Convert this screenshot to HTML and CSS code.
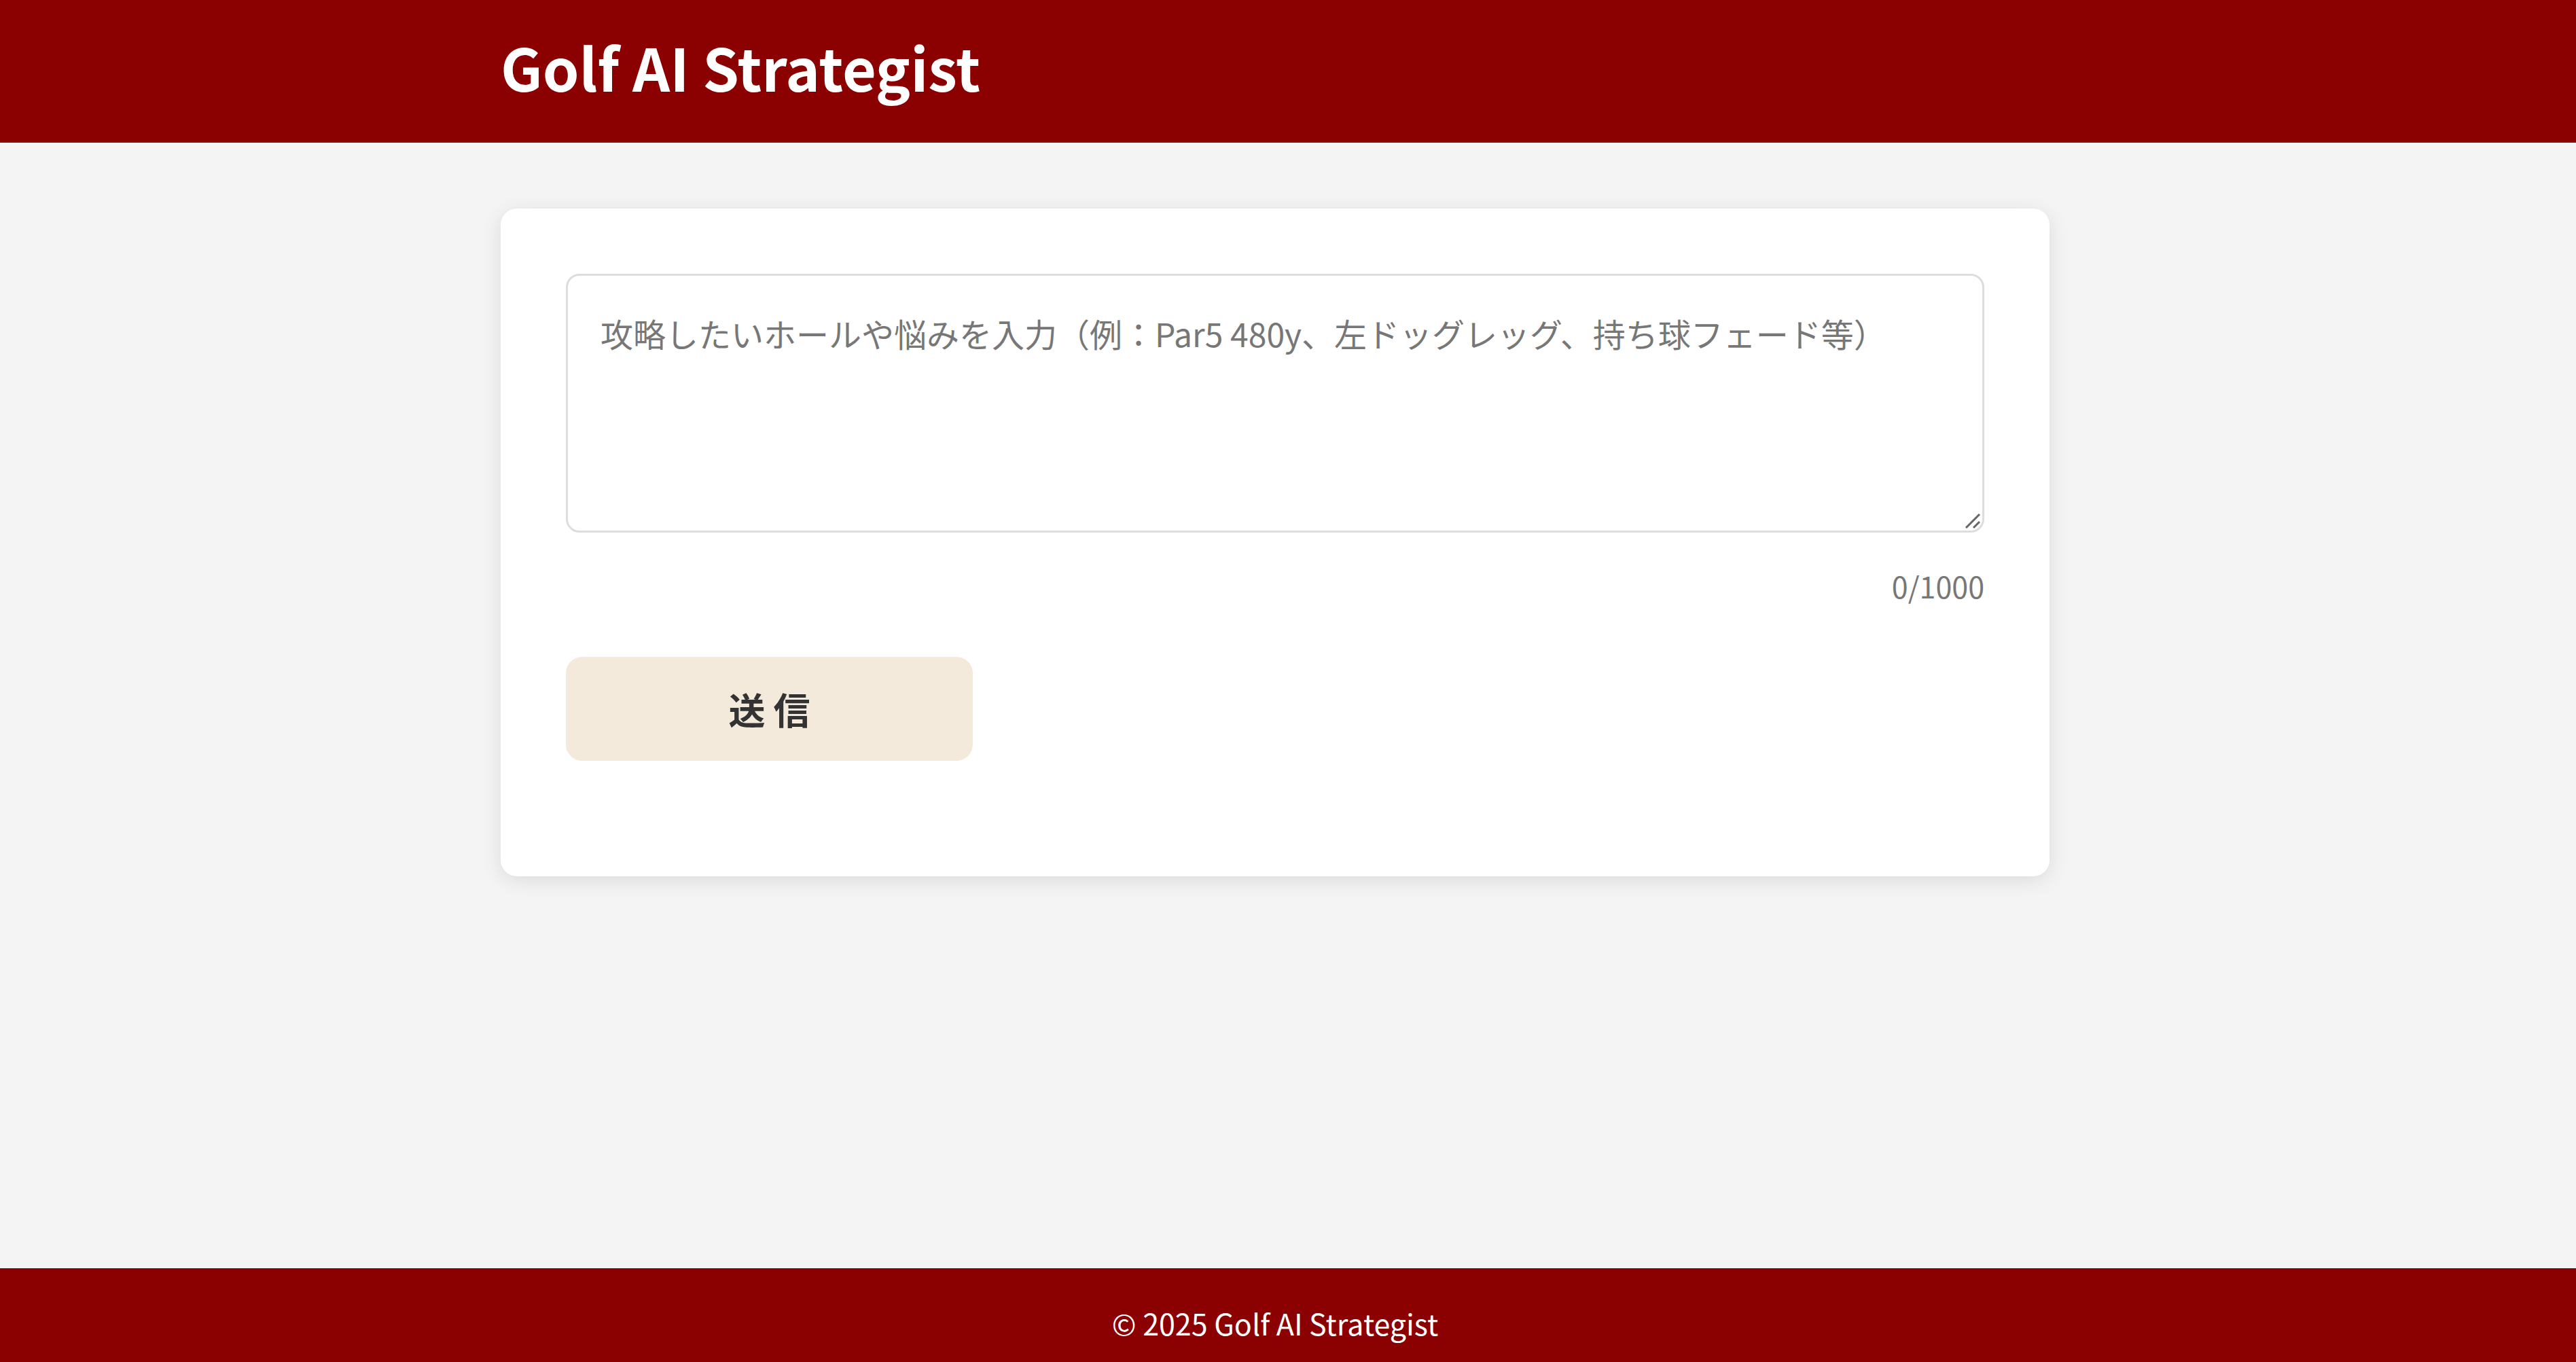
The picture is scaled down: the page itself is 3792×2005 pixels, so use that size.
FILE: index.html
```html
<!DOCTYPE html>
<html lang="ja">
<head>
<meta charset="utf-8">
<title>Golf AI Strategist</title>
<link rel="stylesheet" href="styles.css">
</head>
<body>
<header class="site-header">
  <div class="wrap header-inner">
    <h1 class="site-title">Golf AI Strategist</h1>
  </div>
</header>
<main class="site-main">
  <div class="wrap">
    <section class="card">
      <form class="ask-form">
        <div class="field">
          <textarea class="question" placeholder="攻略したいホールや悩みを入力（例：Par5 480y、左ドッグレッグ、持ち球フェード等）"></textarea>
          <svg class="grip" width="24" height="24" viewBox="0 0 24 24" aria-hidden="true">
            <line x1="2" y1="22" x2="22" y2="2" stroke="#666" stroke-width="3"/>
            <line x1="13" y1="22" x2="22" y2="13" stroke="#666" stroke-width="3"/>
          </svg>
        </div>
        <div class="counter">0/1000</div>
        <div class="actions">
          <button type="button" class="send-btn">送信</button>
        </div>
      </form>
    </section>
  </div>
</main>
<footer class="site-footer">
  <div class="wrap footer-inner">© 2025 Golf AI Strategist</div>
</footer>
</body>
</html>
```

FILE: styles.css
```css
* { box-sizing: border-box; }

html, body {
  margin: 0;
  padding: 0;
}

body {
  background: #f4f4f4;
  font-family: "Noto Sans CJK JP", "Noto Sans", sans-serif;
  color: #333;
}

.wrap {
  width: 2280px;
  margin: 0 auto;
}

.site-header {
  background: #8b0000;
  height: 210px;
  display: flex;
  align-items: center;
  padding-right: 38px;
}

.header-inner {
  padding-bottom: 14px;
}

.site-title {
  margin: 0;
  color: #fff;
  font-size: 86px;
  font-weight: 700;
  line-height: 1.2;
}

.site-main {
  min-height: 1657px;
  padding: 97px 38px 0 0;
}

.card {
  background: #fff;
  border-radius: 24px;
  box-shadow: 0 6px 30px rgba(0, 0, 0, 0.1);
  padding: 96px 96px 170px;
}

.field {
  position: relative;
}

.question {
  display: block;
  width: 100%;
  height: 381px;
  border: 3px solid #ddd;
  border-radius: 20px;
  padding: 48px;
  font-family: inherit;
  font-size: 48px;
  line-height: 1.5;
  color: #333;
  resize: none;
  outline: none;
}

.question::placeholder {
  color: #777;
  opacity: 1;
}

.grip {
  position: absolute;
  right: 5px;
  bottom: 5px;
}

.counter {
  margin-top: 46px;
  text-align: right;
  font-size: 43px;
  line-height: 1.5;
  color: #777;
}

.actions {
  margin-top: 72px;
}

.send-btn {
  width: 599px;
  height: 153px;
  border: none;
  border-radius: 24px;
  background: #f4eadc;
  color: #333;
  font-family: inherit;
  font-size: 54px;
  font-weight: 700;
  letter-spacing: 12px;
  text-indent: 12px;
  cursor: pointer;
}

.site-footer {
  background: #8b0000;
  color: #fff;
  padding: 48px 38px 50px 0;
}

.footer-inner {
  text-align: center;
  font-size: 43px;
  line-height: 1.5;
}
```
